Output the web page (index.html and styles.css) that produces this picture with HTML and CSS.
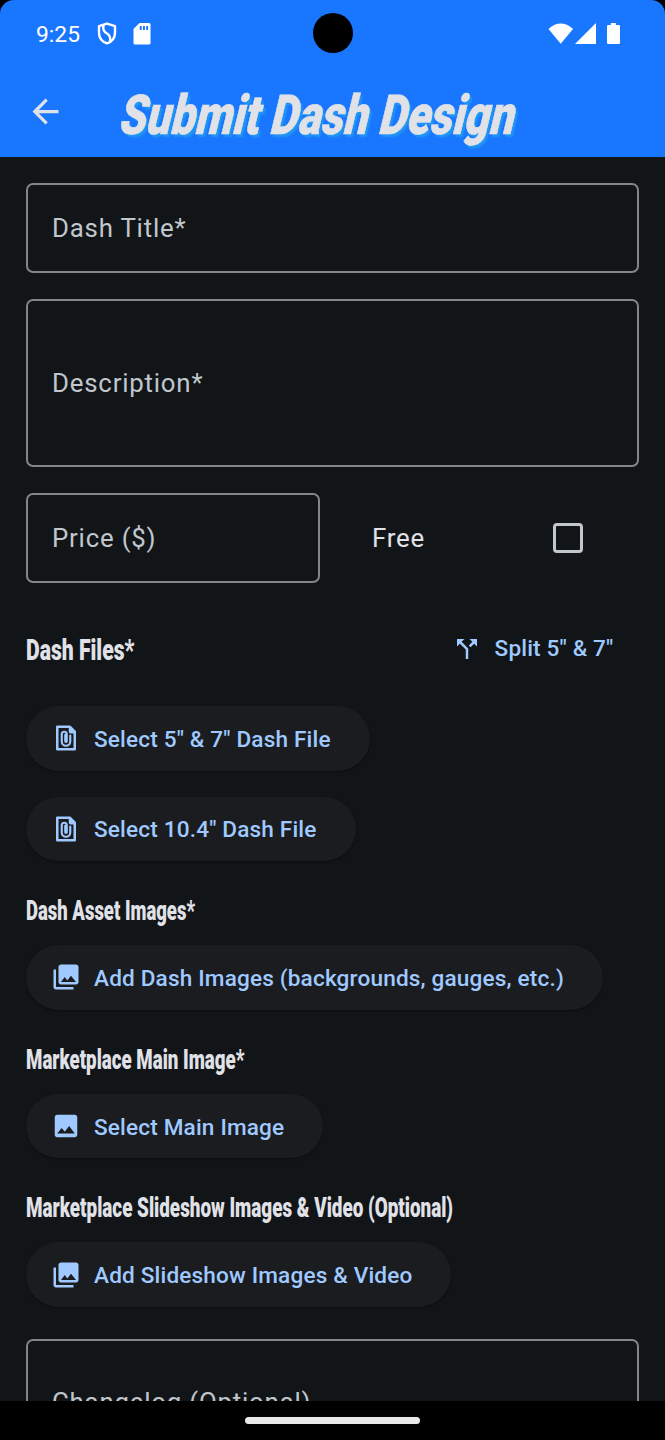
FILE: index.html
```html
<!DOCTYPE html>
<html lang="en">
  <head>
    <meta charset="utf-8" />
    <title>Submit Dash Design</title>
    <link rel="stylesheet" href="styles.css">
  </head>
  <body>
    <div id="screen">
      <header>
        <div class="statusBar">
          <span class="time">9:25</span>
          <svg class="shield" width="20" height="23" viewBox="0 0 20 23" fill="none" stroke="#fff" stroke-width="2.4" stroke-linejoin="round">
            <path d="M10 1.6 L18 4.2 V10.5 C18 15.5 15 19.7 10 21.4 C5 19.7 2 15.5 2 10.5 V4.2 Z" />
            <path d="M6.5 3 C5.5 8 7 10 10 11.5 C13 13.5 14 15.5 13 19.5" />
          </svg>
          <svg class="sdCard" width="18" height="22" viewBox="0 0 18 22">
            <path fill="#fff" d="M6.5 0 H16 Q17.5 0 17.5 1.5 V20 Q17.5 21.5 16 21.5 H2 Q.5 21.5 .5 20 V6 Z" />
            <path fill="#1976ff" d="M6.8 3h1.9v4H6.8zM10 3h1.9v4H10zM13.2 3h1.9v4h-1.9z" />
          </svg>
          <span class="camera"></span>
          <svg class="signals" width="74" height="22" viewBox="0 0 74 22" fill="#fff">
            <path d="M.5 6 Q12.7 -4.8 25 6 L12.7 20.7 Z" />
            <path d="M27 21 L48 0 V21 Z" />
            <path d="M62.8 0 h5 v2 h3 q1.2 0 1.2 1.2 V19.8 q0 1.2 -1.2 1.2 H60.2 q-1.2 0 -1.2 -1.2 V3.2 q0 -1.2 1.2 -1.2 h2.6 z" />
          </svg>
        </div>
        <div class="appBar">
          <svg class="back" width="39" height="39" viewBox="0 0 24 24" fill="#e1e2e8">
            <path d="M20 11H7.83l5.59-5.59L12 4l-8 8 8 8 1.41-1.41L7.83 13H20v-2z" />
          </svg>
          <h1>Submit Dash Design</h1>
        </div>
      </header>

      <main>
        <div class="field">Dash Title*</div>
        <div class="field tall">Description*</div>
        <div class="priceRow">
          <div class="field">Price ($)</div>
          <div class="free">
            <span>Free</span>
            <span class="checkbox"></span>
          </div>
        </div>

        <div class="filesRow">
          <h2>Dash Files*</h2>
          <div class="split">
            <svg width="30" height="30" viewBox="0 0 24 24">
              <path d="M14 4l2.29 2.29-2.88 2.88 1.42 1.42 2.88-2.88L20 10V4zM10 4H4v6l2.29-2.29 4.71 4.7V20h2v-8.41l-5.29-5.3z" />
            </svg>
            <span>Split 5" &amp; 7"</span>
          </div>
        </div>

        <div class="btn first">
          <svg width="30" height="30" viewBox="0 0 24 24" fill="none" stroke="#9fc9ff">
            <path stroke-width="2" stroke-linejoin="round" d="M5 3h10l4 4V21H5z" />
            <path fill="#9fc9ff" stroke="none" d="M14.2 3l5.3 5.3h-3.8q-1.5 0-1.5-1.5z" />
            <path stroke-width="1.7" stroke-linecap="round" d="M15.4 10v4.8a3.4 3.4 0 0 1-6.8 0V9a2 2 0 0 1 4 0v5.6a.6.6 0 0 1-1.2 0V9.5" />
          </svg>
          <span>Select 5" &amp; 7" Dash File</span>
        </div>
        <div class="btn second">
          <svg width="30" height="30" viewBox="0 0 24 24" fill="none" stroke="#9fc9ff">
            <path stroke-width="2" stroke-linejoin="round" d="M5 3h10l4 4V21H5z" />
            <path fill="#9fc9ff" stroke="none" d="M14.2 3l5.3 5.3h-3.8q-1.5 0-1.5-1.5z" />
            <path stroke-width="1.7" stroke-linecap="round" d="M15.4 10v4.8a3.4 3.4 0 0 1-6.8 0V9a2 2 0 0 1 4 0v5.6a.6.6 0 0 1-1.2 0V9.5" />
          </svg>
          <span>Select 10.4" Dash File</span>
        </div>

        <h3 class="assets">Dash Asset Images*</h3>
        <div class="btn">
          <svg width="30" height="30" viewBox="0 0 24 24">
            <path d="M22 16V4c0-1.1-.9-2-2-2H8c-1.1 0-2 .9-2 2v12c0 1.1.9 2 2 2h12c1.1 0 2-.9 2-2zm-11-4l2.03 2.71L16 11l4 5H8l3-4zM2 6v14c0 1.1.9 2 2 2h14v-2H4V6H2z" />
          </svg>
          <span>Add Dash Images (backgrounds, gauges, etc.)</span>
        </div>

        <h3>Marketplace Main Image*</h3>
        <div class="btn">
          <svg width="30" height="30" viewBox="0 0 24 24">
            <path d="M21 19V5c0-1.1-.9-2-2-2H5c-1.1 0-2 .9-2 2v14c0 1.1.9 2 2 2h14c1.1 0 2-.9 2-2zM8.5 13.5l2.5 3.01L14.5 12l4.5 6H5l3.5-4.5z" />
          </svg>
          <span>Select Main Image</span>
        </div>

        <h3 class="slideshow">Marketplace Slideshow Images &amp; Video (Optional)</h3>
        <div class="btn">
          <svg width="30" height="30" viewBox="0 0 24 24">
            <path d="M22 16V4c0-1.1-.9-2-2-2H8c-1.1 0-2 .9-2 2v12c0 1.1.9 2 2 2h12c1.1 0 2-.9 2-2zm-11-4l2.03 2.71L16 11l4 5H8l3-4zM2 6v14c0 1.1.9 2 2 2h14v-2H4V6H2z" />
          </svg>
          <span>Add Slideshow Images &amp; Video</span>
        </div>

        <div class="field changelog">Changelog (Optional)</div>
      </main>

      <footer><span class="handle"></span></footer>
    </div>
  </body>
</html>
```
FILE: styles.css
```css
* {
  box-sizing: border-box;
}
body {
  margin: 0;
  background-color: #000;
  font-family: Roboto, sans-serif;
}
#screen {
  display: flex;
  flex-direction: column;
  width: 665px;
  height: 1440px;
  overflow: hidden;
}
svg {
  flex: none;
}
h1,
h2,
h3 {
  flex: none;
  margin: 0;
  white-space: nowrap;
  color: #e1e2e8;
  transform-origin: 0 50%;
}

/* header */
header {
  flex: none;
  height: 157px;
  background-color: #1976ff;
  border-radius: 14px 14px 0 0;
}
.statusBar {
  position: relative;
  display: flex;
  align-items: center;
  height: 67px;
  padding: 0 43px 0 36px;
  color: #fff;
}
.time {
  width: 61px;
  font-size: 22.8px;
  line-height: 26px;
  margin-top: 2px;
}
.sdCard {
  margin-left: 16px;
}
.camera {
  position: absolute;
  left: 312.5px;
  top: 13px;
  width: 40px;
  height: 40px;
  border-radius: 50%;
  background-color: #000;
}
.signals {
  margin-left: auto;
}
.appBar {
  display: flex;
  align-items: center;
  height: 89px;
  padding-left: 26px;
}
h1 {
  margin: 7px 0 0 57px;
  font-size: 55px;
  line-height: 64px;
  font-weight: 900;
  transform: scaleX(0.788) skewX(-17deg);
  -webkit-text-stroke: 0.6px #e1e2e8;
  text-shadow: 4px 3px 2px #2196f3;
}

/* form */
main {
  display: flex;
  flex-direction: column;
  align-items: flex-start;
  height: 1244px;
  padding: 26px 26px 0;
  overflow: hidden;
  background-color: #111518;
}
.field {
  display: flex;
  flex: none;
  align-items: center;
  width: 613px;
  height: 90px;
  padding: 0 0 1px 24px;
  border: 2px solid #828688;
  border-radius: 7px;
  color: #c2c6cd;
  font-size: 25.8px;
  letter-spacing: 0.8px;
}
.tall {
  height: 168px;
  margin-top: 26px;
}
.priceRow {
  display: flex;
  flex: none;
  width: 613px;
  margin-top: 26px;
}
.priceRow .field {
  width: 294px;
}
.free {
  display: flex;
  flex: 1;
  align-items: center;
  justify-content: space-between;
  padding: 0 56px 0 52px;
  color: #e1e2e8;
  font-size: 25.8px;
  letter-spacing: 0.8px;
}
.checkbox {
  width: 30px;
  height: 30px;
  border: 3px solid #c2c6cd;
  border-radius: 4px;
}
.filesRow {
  display: flex;
  flex: none;
  align-items: center;
  justify-content: space-between;
  width: 613px;
  height: 78px;
  margin-top: 27px;
}
h2 {
  width: 200px;
  font-size: 30px;
  font-weight: 900;
  transform: scaleX(0.705);
}
h3 {
  height: 32px;
  margin: 34px 0 18px;
  font-size: 27.4px;
  line-height: 32px;
  font-weight: 900;
  transform: scaleX(0.683);
}
h3.assets {
  transform: scaleX(0.675);
}
h3.slideshow {
  transform: scaleX(0.688);
}
.split,
.btn {
  display: flex;
  align-items: center;
  gap: 13px;
  color: #9fc9ff;
  fill: #9fc9ff;
  font-size: 22.6px;
  font-weight: 500;
  letter-spacing: 0.16px;
  white-space: nowrap;
}
.split {
  padding: 0 25.5px 1px 0;
}
.btn {
  flex: none;
  height: 64.6px;
  padding: 0 39px 0 25px;
  border-radius: 33px;
  background-color: #1a1c1f;
  box-shadow: 0 1px 2px rgba(0, 0, 0, 0.4);
}
.btn span {
  padding-top: 2px;
}
.first {
  margin-top: 18px;
}
.second {
  margin-top: 26px;
}
.changelog {
  height: 128px;
  margin-top: 32px;
}

/* gesture bar */
footer {
  display: flex;
  justify-content: center;
  height: 39px;
  padding-top: 16px;
  background-color: #000;
}
.handle {
  width: 175px;
  height: 7px;
  border-radius: 4px;
  background-color: #e8e8e8;
}
```
